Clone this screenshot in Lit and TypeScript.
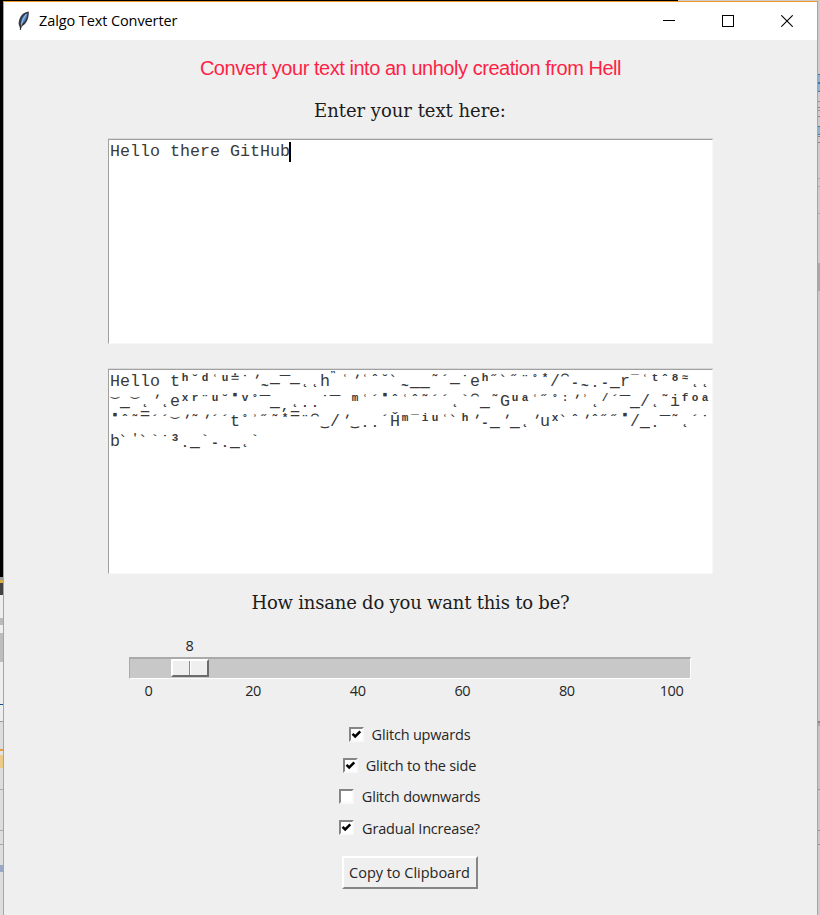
import { LitElement, html, css, svg } from "lit";
import { customElement, property } from "lit/decorators.js";
import { classMap } from "lit/directives/class-map.js";

// Each token is one 10px cell. "^x" is a small raised letter, "_x" a lowered
// mark, "~x" a raised mark, "-x" a mark near the baseline, "." an empty cell,
// anything else a full-size letter.
const ROWS = [
  "H e l l o . t ^h ~˘ ^d ~ʿ ^u +≐ ~˙ ~′ _~ -— =— -— _˛ _˛ h +῍ ~ʿ ~′ ~ʿ ~ˆ ~˘ ~‵ _~ _— _— ~˜ ~´ -— ~˙ e ^h ~˝ ~‵ ~˝ ~¨ ~˚ ^* / ~⁀ -- _~ _· -- _— r ~¯ ~ʿ ^t ~ˆ ^8 ^≈ _˛ _˛",
  "=‿ _— =‿ _˛ ~′ _˛ e ^x ^r ~¨ ^u ~˘ =▪ ^v ~˚ =— _— _, _˛ _· _· ~˙ =— . ^m ~ʿ ~´ =▪ ~ˆ ~ʿ ~ˆ ~˜ ~´ ~´ _˛ ~` ~⁀ _— ~˜ G ^u ^a ~ʿ ~˝ ~˚ ^: ~′ ~ʾ _˛ ^/ ~´ =— _— / _˛ ~˜ i ^f ^o ^a",
  "=▪ ~ˆ ~˜ == ~´ ~´ =‿ ~′ ~˜ ~′ ~´ ~´ t ~˚ ~ʾ ~˝ ~˜ ^* == ~¨ ~⁀ _‿ / ~′ _‿ _· _· ~´ Ȟ ^m ~¯ ^i ^u ~ʿ ~‵ ^h ~′ -- _— ~′ _— _˛ ~′ u ^x ~‵ ~ˆ ~′ ~ˆ ~˝ ~˝ =▪ / _— _· =— ~˜ _˛ ~´ ~˙",
  "b ~‵ ^' ~‵ ~` ~˙ ^3 _· _— ~` -- _· _— _˛ ~`",
].map((row) => row.split(" "));

const KINDS: Record<string, string> = { "^": "sup", "~": "high", "_": "low", "=": "wide", "+": "stack", "-": "mid" };

@customElement("glitch-output")
class GlitchOutput extends LitElement {
  static styles = css`
    :host { display: block; }
    .row { display: flex; height: 20px; line-height: 20px; }
    .cell { flex: none; width: 10px; height: 20px; white-space: pre; display: flex; justify-content: center; }
    .sup { font-size: 11px; line-height: 13px; font-weight: 600; }
    .high { font-size: 13px; line-height: 18px; font-weight: 600; }
    .low { font-size: 13px; line-height: 29px; font-weight: 600; }
    .low.tail { line-height: 17px; }
    .low.line { line-height: 32px; }
    .low.tie { line-height: 20px; }
    .mid { font-size: 13px; line-height: 24px; font-weight: 600; }
    .wide { font-size: 14px; line-height: 6px; }
    .wide.tie { line-height: 0; }
    .stack { font-size: 14px; line-height: 12px; }
    .line { transform: scaleX(1.25); }
    .prime { transform: skewX(-22deg); }
    .back { transform: skewX(22deg); }
  `;
  cell(token: string) {
    const kind = (token.length > 1 && KINDS[token[0]]) || "base";
    const glyph = kind !== "base" ? token.slice(1) : token === "." ? " " : token;
    return html`<span class=${classMap({
      cell: true,
      [kind]: true,
      line: glyph === "—" || glyph === "=",
      tail: glyph === "˛",
      tie: glyph === "‿",
      prime: glyph === "′",
      back: glyph === "‵",
    })}>${glyph}</span>`;
  }
  render() {
    return ROWS.map((row) => html`<div class="row">${row.map((t) => this.cell(t))}</div>`);
  }
}

@customElement("tk-check")
class TkCheck extends LitElement {
  @property() label = "";
  @property({ type: Boolean }) checked = false;
  static styles = css`
    :host { display: flex; align-items: center; justify-content: center; gap: 8px; height: 31.2px; }
    .box { box-sizing: border-box; width: 15px; height: 15px; background: #fff; border: 2px solid; border-color: #858585 #f9f9f9 #f9f9f9 #858585; margin-top: -1px; }
    svg { display: block; }
    .label { white-space: nowrap; }
  `;
  render() {
    return html`<span class="box">${this.checked
      ? html`<svg width="11" height="11" viewBox="0 0 11 11">${svg`<path d="M1.5 4.8 L4.2 7.5 L9.3 2.4" fill="none" stroke="#000" stroke-width="2.5"/>`}</svg>`
      : ""}</span><span class="label">${this.label}</span>`;
  }
}

@customElement("app-root")
class AppRoot extends LitElement {
  static styles = css`
    :host {
      display: block; box-sizing: border-box; width: 820px; height: 915px; padding: 1px 2px 0 3px; overflow: hidden;
      font-family: "Open Sans", "Noto Sans", sans-serif; font-size: 14px; color: #262626;
      background:
        linear-gradient(#000, #000) 0 0 / 678px 1px no-repeat,
        linear-gradient(to bottom, #000 0 577px, #999 577px 580px, #d8ae45 580px 583px, #444 583px 595px, #eee 595px 618px, #bbb 618px 625px, #eee 625px 633px, #bdbdbd 633px 662px, #eee 662px 704px, #164f86 704px 705px, #eee 705px 721px, #999 721px 722px, #ddd 722px 749px, #e99b42 749px 751px, #e3e3e3 751px 755px, #eccb86 755px 768px, #ddd 768px 789px, #aaa 789px 790px, #ddd 790px 830px, #aaa 830px 831px, #ddd 831px 844px, #aaa 844px 845px, #ddd 845px 865px, #9aa8c4 865px 872px, #ddd 872px) 0 0 / 3px 915px no-repeat,
        linear-gradient(to bottom, #ccc 0 74px, #2c7cb8 74px 75px, #8fb4d0 75px 82px, #2c7cb8 82px 84px, #8fb4d0 84px 91px, #2c7cb8 91px 92px, #ccc 92px 101px, #999 101px 102px, #ccc 102px 107px, #888 107px 108px, #ccc 108px 110px, #999 110px 111px, #ccc 111px 116px, #888 116px 117px, #ccc 117px 126px, #2c7cb8 126px 127px, #8fb4d0 127px 134px, #2c7cb8 134px 135px, #ccc 135px 136px, #888 136px 137px, #ccc 137px 142px, #888 142px 143px, #ccc 143px 178px, #aaa 178px 179px, #ccc 179px 186px, #aaa 186px 187px, #ccc 187px 213px, #aaa 213px 214px, #ccc 214px 263px, #a8a8a8 263px 291px, #c8c8c8 291px 721px, #888 721px 723px, #aaa 723px 726px, #c4c4c4 726px 789px, #999 789px 790px, #c8c8c8 790px 830px, #999 830px 831px, #c8c8c8 831px 844px, #999 844px 845px, #ccc 845px) 100% 0 / 3px 915px no-repeat,
        #ccc;
    }
    .window { box-sizing: border-box; height: 914px; border: 1px solid #f0962a; border-bottom: 0; background: #efefef; display: flex; flex-direction: column; }
    .titlebar { height: 38px; background: #fff; display: flex; align-items: center; flex: none; }
    .feather { margin: 0 6px 0 12px; }
    .title { flex: 1; font-size: 14.5px; letter-spacing: -0.1px; line-height: 20px; margin-left: 1px; color: #000; }
    .controls { display: flex; gap: 47px; margin-right: 24px; }
    .controls svg, .feather { display: block; flex: none; }
    .body { display: flex; flex-direction: column; align-items: center; }
    .banner { margin-top: 15px; font: 20px/26px "Liberation Sans", sans-serif; letter-spacing: -0.46px; color: #ff1f45; white-space: nowrap; }
    .prompt { font: 18px/26px "DejaVu Serif", serif; color: #1c1c1c; white-space: nowrap; }
    .first { margin: 17px 1px 1px 0; letter-spacing: -0.03px; }
    .area { box-sizing: border-box; width: 605px; height: 205px; background: #fff; border-top: 1px solid #a0a0a0; border-left: 1px solid #a0a0a0; border-right: 1px solid #f8f8f8; border-bottom: 1px solid #f8f8f8; padding: 2px 0 0 1px; font: 16.67px/20px "Liberation Mono", "DejaVu Sans Mono", monospace; color: #3a3a3a; box-shadow: 0 -1px #d9d9d9; }
    .entry { display: flex; margin-top: 14px; }
    .caret { width: 2px; height: 20px; margin-left: -1px; background: #000; }
    .result { margin-top: 25px; }
    .second { margin-top: 16px; letter-spacing: -0.21px; }
    .lower { display: flex; flex-direction: column; align-items: center; margin-right: 2px; }
    .scale { width: 562px; margin-top: 19px; }
    .value { display: block; width: 122px; text-align: center; height: 22px; line-height: 22px; }
    .trough { box-sizing: border-box; height: 22px; background: #c8c8c8; border-style: solid; border-width: 2px 1px 1px 1px; border-color: #aaa #fff #fff #aaa; padding-left: 41px; }
    .thumb { box-sizing: border-box; width: 38px; height: 18px; background: #efefef; border: 2px solid; border-color: #fff #6c6c6c #6c6c6c #fff; display: flex; justify-content: center; }
    .groove { width: 1px; background: #888; border-right: 1px solid #fff; }
    .ticks { display: flex; justify-content: space-between; margin: 1px -1px 0 0; height: 22px; line-height: 22px; }
    .tick { width: 40px; text-align: center; }
    .value, .tick { font-size: 14.5px; letter-spacing: -0.4px; }
    .checks { margin-top: 17px; font-size: 14.5px; letter-spacing: -0.19px; }
    .copy { box-sizing: border-box; width: 136px; height: 33px; margin: 12px 0 0; padding: 0; font: inherit; font-size: 14.5px; letter-spacing: -0.02px; color: inherit; white-space: nowrap; background: #efefef; border: 2px solid; border-color: #fff #858585 #858585 #fff; border-radius: 0; }
  `;
  render() {
    return html`
      <div class="window">
        <div class="titlebar">
          <svg class="feather" width="16" height="20" viewBox="0 0 16 20">
            <path d="M12.8 .5 C7 1 2.8 6 2.6 13 L4.5 18.5 L6.5 15 C11.5 12 13 6 12.8 .5Z" fill="#343a42"/>
            <path d="M11.4 2.5 C7 4 5 8 4.7 13.5 C8.5 12 11 7 11.4 2.5Z" fill="#5186cb"/>
            <path d="M10.5 3 C7.5 7 5.5 11 4.5 19" fill="none" stroke="#b8d4ef" stroke-width=".8"/>
            <path d="M4.8 14 L4.3 19" stroke="#222" stroke-width="1"/>
          </svg>
          <span class="title">Zalgo Text Converter</span>
          <div class="controls">
            <svg width="12" height="12" viewBox="0 0 12 12"><path d="M0 5.5H12" stroke="#000"/></svg>
            <svg width="12" height="12" viewBox="0 0 12 12"><rect x=".5" y=".5" width="11" height="11" fill="none" stroke="#000"/></svg>
            <svg width="12" height="12" viewBox="0 0 12 12"><path d="M.3 .3L11.7 11.7M11.7 .3L.3 11.7" stroke="#000" stroke-width="1.1"/></svg>
          </div>
        </div>
        <div class="body">
          <div class="banner">Convert your text into an unholy creation from Hell</div>
          <div class="prompt first">Enter your text here:</div>
          <div class="area entry"><span>Hello there GitHub</span><span class="caret"></span></div>
          <div class="area result"><glitch-output></glitch-output></div>
          <div class="prompt second">How insane do you want this to be?</div>
          <div class="lower">
            <div class="scale">
              <span class="value">8</span>
              <div class="trough"><div class="thumb"><span class="groove"></span></div></div>
              <div class="ticks">${[0, 20, 40, 60, 80, 100].map((n) => html`<span class="tick">${n}</span>`)}</div>
            </div>
            <div class="checks">
              <tk-check label="Glitch upwards" checked></tk-check>
              <tk-check label="Glitch to the side" checked></tk-check>
              <tk-check label="Glitch downwards"></tk-check>
              <tk-check label="Gradual Increase?" checked></tk-check>
            </div>
            <button class="copy">Copy to Clipboard</button>
          </div>
        </div>
      </div>`;
  }
}
